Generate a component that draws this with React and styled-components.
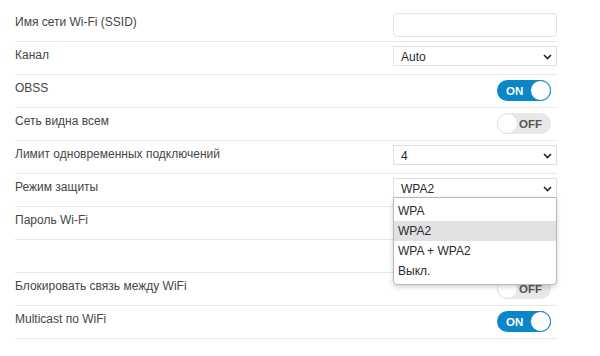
import React from 'react';
import styled, { createGlobalStyle } from 'styled-components';

const Global = createGlobalStyle`
  body {
    margin: 0;
    background: #fff;
    font-family: "Liberation Sans", Arial, sans-serif;
    color: #444;
  }
`;

const Page = styled.div`
  padding: 9px 0 0 15px;
  width: 542px;
`;

const Row = styled.div`
  display: flex;
  justify-content: space-between;
  align-items: flex-start;
  height: 33px;
  box-sizing: border-box;
  border-bottom: 1px solid #e6e6e6;
`;

const Label = styled.div`
  font-size: 12px;
  line-height: 15px;
  padding-top: 6px;
  color: #464646;
`;

const Control = styled.div`
  position: relative;
  width: 164px;
  padding-top: ${p => p.$top || 4}px;
  display: flex;
  justify-content: flex-end;
`;

const Input = styled.div`
  width: 100%;
  height: 24px;
  box-sizing: border-box;
  border: 1px solid #e3e3e3;
  border-radius: 4px;
  background: #fff;
`;

const Select = styled.div`
  width: 100%;
  height: 20px;
  box-sizing: border-box;
  border: 1px solid #e0e0e0;
  display: flex;
  align-items: center;
  justify-content: space-between;
  padding: 1px 4px 0 7px;
  font-size: 12px;
  color: #2a2a2a;
  background: #fff;
`;

const Toggle = styled.div`
  position: relative;
  width: 54px;
  height: 21px;
  margin-right: 6px;
  border-radius: 11px;
  box-sizing: border-box;
  background: ${p => (p.$on ? '#0b86c6' : '#e8e8e8')};
  color: ${p => (p.$on ? '#fff' : '#555')};
  font-size: 11.5px;
  font-weight: bold;
  display: flex;
  align-items: center;
  justify-content: ${p => (p.$on ? 'flex-start' : 'flex-end')};
  padding: 0 ${p => (p.$on ? '0 0 9px' : '9px 0 0')};
`;

const Knob = styled.span`
  position: absolute;
  top: 0;
  ${p => (p.$on ? 'right: 0;' : 'left: 0;')}
  width: 21px;
  height: 21px;
  box-sizing: border-box;
  border-radius: 50%;
  background: #fff;
  border: 1px solid ${p => (p.$on ? '#0b86c6' : '#e2e2e2')};
`;

const Menu = styled.div`
  position: absolute;
  top: 23px;
  left: 0;
  width: 164px;
  box-sizing: border-box;
  padding: 3px 0 3px;
  background: #fff;
  border: 1px solid #b9b9b9;
  border-radius: 0 0 4px 4px;
  box-shadow: 0 2px 5px rgba(0, 0, 0, 0.18);
  z-index: 2;
`;

const Option = styled.div`
  height: 20px;
  line-height: 20px;
  padding-left: 4px;
  font-size: 12px;
  color: #2a2a2a;
  background: ${p => (p.$active ? '#e1e1e4' : 'transparent')};
`;

const Chevron = () => (
  <svg width="9" height="6" viewBox="0 0 9 6">
    <path d="M1 1l3.5 3.5L8 1" fill="none" stroke="#222" strokeWidth="1.6" />
  </svg>
);

const Switch = ({ on }) => (
  <Toggle $on={on}>
    {on ? 'ON' : 'OFF'}
    <Knob $on={on} />
  </Toggle>
);

const Drop = ({ value }) => (
  <Select>
    <span>{value}</span>
    <Chevron />
  </Select>
);

export default function App() {
  return (
    <>
      <Global />
      <Page>
        <Row>
          <Label>Имя сети Wi-Fi (SSID)</Label>
          <Control><Input /></Control>
        </Row>
        <Row>
          <Label>Канал</Label>
          <Control><Drop value="Auto" /></Control>
        </Row>
        <Row>
          <Label>OBSS</Label>
          <Control $top={5}><Switch on /></Control>
        </Row>
        <Row>
          <Label>Сеть видна всем</Label>
          <Control $top={5}><Switch /></Control>
        </Row>
        <Row>
          <Label>Лимит одновременных подключений</Label>
          <Control><Drop value="4" /></Control>
        </Row>
        <Row>
          <Label>Режим защиты</Label>
          <Control>
            <Drop value="WPA2" />
            <Menu>
              <Option>WPA</Option>
              <Option $active>WPA2</Option>
              <Option>WPA + WPA2</Option>
              <Option>Выкл.</Option>
            </Menu>
          </Control>
        </Row>
        <Row>
          <Label>Пароль Wi-Fi</Label>
        </Row>
        <Row />
        <Row>
          <Label>Блокировать связь между WiFi</Label>
          <Control $top={5}><Switch /></Control>
        </Row>
        <Row>
          <Label>Multicast по WiFi</Label>
          <Control $top={5}><Switch on /></Control>
        </Row>
      </Page>
    </>
  );
}
